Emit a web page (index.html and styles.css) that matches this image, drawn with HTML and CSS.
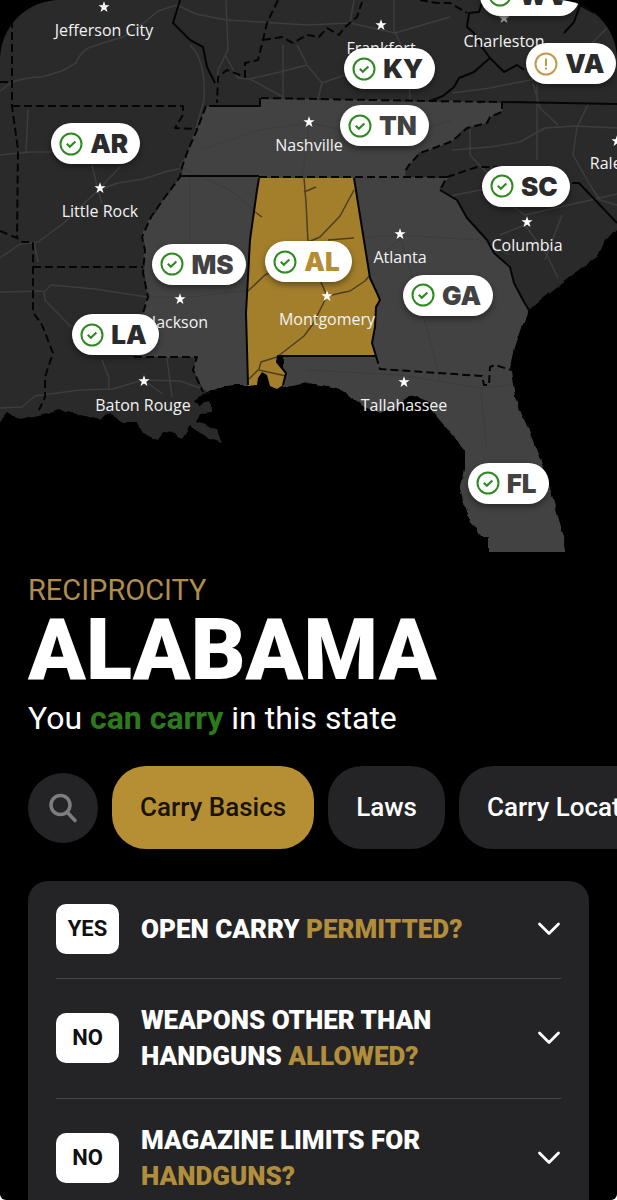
FILE: index.html
```html
<!DOCTYPE html>
<html lang="en">
<head>
<meta charset="utf-8">
<meta name="viewport" content="width=device-width, initial-scale=1">
<title>Reciprocity – Alabama</title>
<link rel="stylesheet" href="styles.css">
</head>
<body>
<main class="screen">
  <svg class="sprite" aria-hidden="true">
    <symbol id="ok" viewBox="0 0 24 24"><circle cx="12" cy="12" r="10.500" fill="none" stroke="#2f8a22" stroke-width="2"/><path d="M7.800 11.800l3 2.900 5.600-5.200" fill="none" stroke="#2f8a22" stroke-width="2.200"/></symbol>
    <symbol id="warn" viewBox="0 0 24 24"><circle cx="12" cy="12" r="10.500" fill="none" stroke="#c29a4a" stroke-width="2"/><path d="M12 6.500v7.500M12 15.500v2" fill="none" stroke="#c29a4a" stroke-width="2"/></symbol>
    <symbol id="star" viewBox="-6 -6 12 12"><path d="M0-5.800L1.400-1.800 5.600-1.800 2.200.8 3.500 4.900 0 2.400-3.500 4.900-2.200.8-5.600-1.800-1.400-1.800z" fill="#fff"/></symbol>
    <symbol id="chevron" viewBox="0 0 24 16"><path d="M2.500 3L12 12.500l9.500-9.500" fill="none" stroke="#fff" stroke-width="2.800" stroke-linecap="round" stroke-linejoin="round"/></symbol>
  </svg>

  <section class="map" aria-label="Reciprocity map">
    <svg class="terrain" viewBox="0 0 617 552" aria-hidden="true">
      <defs>
        <filter id="rough" x="-5%" y="-5%" width="110%" height="110%">
          <feTurbulence type="fractalNoise" baseFrequency="0.12" numOctaves="1" seed="4"/>
          <feDisplacementMap in="SourceGraphic" scale="6" xChannelSelector="R" yChannelSelector="G"/>
        </filter>
      </defs>
      <g filter="url(#rough)">
        <path class="land" d="M-9-9H626V222L617 229 604 243 597 258 584 267 574 274 557 287 540 300 529 310 500 360 420 390 300 380 300 350 248 350 248 385 233 385 217 387 207 392 195 400 200 407 205 402 212 403 212 412 200 413 197 422 217 430 222 442 210 438 200 433 190 425 182 438 175 433 163 432 158 440 143 433 137 423 123 423 107 413 100 420 73 413 57 410 43 415 20 420 7 413-9 432z"/>
        <path class="land land-near" d="M206 106H261V98L307 99 430 101 502 102 502 112 490 117 487 123 467 128 457 137 450 142 434 148 420 153 409 165 404 177H447L440 190 457 200 467 218 487 240 494 253 510 267 514 283 524 302 529 310 522 327 515 347 511 370 515 397 524 420 537 450 547 477 557 513 564 537 565 562H489V537H480L467 513 465 503 460 490 465 470 465 450 454 437 437 417 430 403 417 396 404 398 397 408 380 413 364 407 347 393 334 387 307 383 287 387 283 387 283 350 248 350 248 385 233 385 217 387 207 392 203 390 193 370 197 357H137L143 313 148 297 143 273 145 250 142 237 151 217 165 197 180 177 182 167 188 150 197 130z"/>
      </g>
      <path class="road" d="M0 91L12 82Q28 77 42 77L62 71 76 63Q80 53 88 48L103 43 123 37 145 22 158 11 177 5 196 14 226 20 260 22 307 25M226 0L228 50 218 70 217 84M225 55L238 78 250 79 283 97V45M250 79L280 72 307 65M297 45L307 64M190 45Q206 60 204 100L190 150 180 167M0 155L30 152 51 152M28 110L26 152M0 258L20 244 38 242 65 222 98 190 118 183 143 179 165 172 182 168M98 190L92 165M98 190L120 167M98 190L102 204M34 242L38 262M0 292L45 291 51 285 95 289 147 297M44 291L45 300 71 327M102 360L109 378V389M0 408L22 407 35 396 80 390 113 389 143 380 180 381 200 388M167 358L172 397M143 380L163 394M307 25L350 23 395 33 450 17M394 0V30L408 60 410 100M350 23L354 0M307 65L322 83 345 75 370 62M322 83L318 99M452 150L490 147 520 142 545 128 575 126 617 128M537 84V160M533 83L540 108 558 125M589 103L577 127 573 155 590 185 600 200 617 205M470 128V155L487 173 512 206 525 215 560 207 617 194M450 196L480 190 520 187M525 225L500 235M525 225L547 255 558 278M562 215L545 260M452 93L490 88 540 78 590 45 607 28"/>
      <path class="road road-faint" d="M182 168L230 190 258 213M190 175V280M200 150L260 130 309 123 390 140 452 120M309 125L302 180M355 238L400 235 480 240 510 255M400 235L430 340 440 380M400 240L355 275M250 290L190 297 147 297M307 370L400 375 480 388 511 385M480 388L487 450"/>
      <path class="alabama" d="M259 178H354L361 222 370 278 377 293 380 300 376 307 375 327 372 343 376 356H278L277 362 286 373 283 385 277 389 270 386 267 375 262 372 258 378 257 385 248 386 246 313 250 240z"/>
      <path class="highway" d="M304 178L306 202 308 242M354 190L340 216 320 237 308 242 282 251M354 238L328 240M304 192L316 187M255 212L262 217M320 280L327 296 313 324 304 336 277 357 261 362 259 369 249 379M327 296L350 291 365 281 370 275M248 291L265 275 290 262M259 370L286 376"/>
      <path class="border" d="M259 178L257 190 250 240 246 313 248 385M354 178L361 222 370 278 377 293 380 300 376 307 375 327 372 343 376 356H278L277 362 286 373 283 385M180 176H259M209 106H260V98M180 0L173 23 190 40 203 47 207 67 215 83M430 101L443 96 454 87 459 78 474 72 490 58 479 43 474 33 467 27 469 13 479 12 482 3M490 58L504 72 517 65 524 70M564 33L574 22 580 5 594 13M502 102L617 104M572 183H579L617 223M440 190L457 200 467 218 487 240 494 253 510 267 514 283 524 302 529 310"/>
      <path class="border dashed" d="M12 20V106L18 150 17 237M0 82H12M12 106H183V115L175 128 197 129M206 106L197 130 188 150 182 167 180 177 165 197 151 217 142 237 145 250 143 273 148 297 143 313M0 231L17 238 22 242 33 242V312L42 325 53 353 45 377 45 397 39 410M33 267H143M134 357H197L193 370 203 392M278 0L267 23 263 40 258 60 245 63 245 77 227 70 218 77 217 103M263 40L282 37 293 43 307 35 319 37 327 28 339 35 344 28 357 17 362 2M420 0L437 3 450 3 467 13M261 98L430 101 502 102V112L490 117 487 123 467 128 457 137 450 142 434 148 420 153 409 165 404 173M259 177H447L440 190M447 177L477 167H504M376 356L380 369 482 376 484 385H489L490 367 495 365 511 370"/>
      <g>
        <use href="#star" x="98" y="1" width="12" height="12"/>
        <use href="#star" x="375" y="19" width="12" height="12"/>
        <use href="#star" x="498" y="12" width="12" height="12" opacity=".6"/>
        <use href="#star" x="303" y="116" width="12" height="12"/>
        <use href="#star" x="94" y="182" width="12" height="12"/>
        <use href="#star" x="611" y="135" width="12" height="12"/>
        <use href="#star" x="394" y="228" width="12" height="12"/>
        <use href="#star" x="521" y="216" width="12" height="12"/>
        <use href="#star" x="174" y="293" width="12" height="12"/>
        <use href="#star" x="321" y="290" width="12" height="12"/>
        <use href="#star" x="138" y="375" width="12" height="12"/>
        <use href="#star" x="398" y="376" width="12" height="12"/>
      </g>
      <g class="city">
        <text x="104" y="36">Jefferson City</text>
        <text x="381" y="54">Frankfort</text>
        <text x="504" y="47">Charleston</text>
        <text x="309" y="151">Nashville</text>
        <text x="100" y="217">Little Rock</text>
        <text x="617" y="169">Raleigh</text>
        <text x="400" y="263">Atlanta</text>
        <text x="527" y="251">Columbia</text>
        <text x="180" y="328">Jackson</text>
        <text x="327" y="325">Montgomery</text>
        <text x="143" y="411">Baton Rouge</text>
        <text x="404" y="411">Tallahassee</text>
      </g>
    </svg>
    <button class="pin pin-wv"><svg><use href="#ok"/></svg>WV</button>
    <button class="pin pin-va"><svg><use href="#warn"/></svg>VA</button>
    <button class="pin pin-ky"><svg><use href="#ok"/></svg>KY</button>
    <button class="pin pin-tn near"><svg><use href="#ok"/></svg>TN</button>
    <button class="pin pin-ar"><svg><use href="#ok"/></svg>AR</button>
    <button class="pin pin-sc"><svg><use href="#ok"/></svg>SC</button>
    <button class="pin pin-ms near"><svg><use href="#ok"/></svg>MS</button>
    <button class="pin pin-al current"><svg><use href="#ok"/></svg>AL</button>
    <button class="pin pin-ga near"><svg><use href="#ok"/></svg>GA</button>
    <button class="pin pin-la"><svg><use href="#ok"/></svg>LA</button>
    <button class="pin pin-fl near"><svg><use href="#ok"/></svg>FL</button>
  </section>

  <header class="intro">
    <p class="eyebrow">RECIPROCITY</p>
    <h1 class="state">ALABAMA</h1>
    <p class="status">You <strong>can carry</strong> in this state</p>
  </header>

  <nav class="tabs" aria-label="Sections">
    <button class="search" aria-label="Search"><svg viewBox="0 0 30 30"><circle cx="12.500" cy="12" r="9.500"/><path d="M19.500 19.500L27 27.500"/></svg></button>
    <button class="tab active">Carry Basics</button>
    <button class="tab">Laws</button>
    <button class="tab">Carry Locations</button>
  </nav>

  <section class="card">
    <button class="item"><span class="answer">YES</span><span class="question">OPEN CARRY <em>PERMITTED?</em></span><svg class="chevron"><use href="#chevron"/></svg></button>
    <button class="item"><span class="answer">NO</span><span class="question">WEAPONS OTHER THAN<br>HANDGUNS <em>ALLOWED?</em></span><svg class="chevron"><use href="#chevron"/></svg></button>
    <button class="item"><span class="answer">NO</span><span class="question">MAGAZINE LIMITS FOR<br><em>HANDGUNS?</em></span><svg class="chevron"><use href="#chevron"/></svg></button>
  </section>
</main>
</body>
</html>
```
FILE: styles.css
```css
* { box-sizing: border-box; }
body { margin: 0; background: #fff; font-family: Roboto, sans-serif; }
button { border: 0; margin: 0; font: inherit; cursor: pointer; }
p, h1 { margin: 0; }

.screen {
  height: 100vh;
  overflow: hidden;
  background: #000;
  color: #fff;
  border-radius: 0 0 6px 6px;
}
.sprite { position: absolute; width: 0; height: 0; }

.map {
  position: relative;
  aspect-ratio: 617 / 552;
  overflow: hidden;
  border-radius: 60px 60px 0 0;
}
.terrain { display: block; width: 100%; height: 100%; }
.land { fill: #2b2b2b; }
.land-near { fill: #424242; }
.alabama { fill: #a37f2b; }
.road { fill: none; stroke: #3d3d3d; stroke-width: 1.5; stroke-linejoin: round; }
.road-faint { stroke: #3c3c3c; stroke-width: 1; }
.highway { fill: none; stroke: #4c3f22; stroke-width: 1.5; stroke-linejoin: round; }
.border { fill: none; stroke: #050505; stroke-width: 2; stroke-linejoin: round; }
.dashed { stroke-dasharray: 8 4; }
.city text {
  fill: #f2f2f2;
  font-family: "Open Sans", sans-serif;
  font-size: 16px;
  text-anchor: middle;
}

.pin {
  position: absolute;
  display: flex;
  align-items: center;
  gap: 7px;
  height: 41px;
  padding: 0 12px 0 8px;
  border-radius: 21px;
  background: #fff;
  color: #2b2b2b;
  font: 900 26px/41px Inter, sans-serif;
  box-shadow: 0 3px 6px rgba(0, 0, 0, .4);
}
.pin svg { width: 24px; height: 24px; flex: none; }
.pin.near { color: #424242; }
.pin.current { color: #b58e34; }
.pin-wv { left: 77.8%; top: -4.6%; }
.pin-va { left: 85.3%; top: 7.8%; }
.pin-ky { left: 55.8%; top: 8.7%; }
.pin-tn { left: 55.1%; top: 19.1%; }
.pin-ar { left: 8.3%; top: 22.3%; }
.pin-sc { left: 78.1%; top: 30%; }
.pin-ms { left: 24.7%; top: 44.2%; }
.pin-al { left: 43%; top: 43.7%; }
.pin-ga { left: 65.3%; top: 49.8%; }
.pin-la { left: 11.7%; top: 56.9%; }
.pin-fl { left: 75.8%; top: 83.8%; }

.intro { padding: 20px 28px 0; }
.eyebrow { color: #b08d4b; font-size: 29px; line-height: 36px; }
.state { font-size: 85px; line-height: 84px; font-weight: 900; }
.status { font-size: 32px; line-height: 52px; white-space: nowrap; }
.status strong { color: #2d7a1c; }

.tabs {
  display: flex;
  align-items: center;
  gap: 14px;
  padding: 22px 0 32px 28px;
  overflow: hidden;
}
.search {
  display: grid;
  place-items: center;
  flex: none;
  width: 70px;
  height: 70px;
  padding: 0;
  border-radius: 50%;
  background: #242426;
}
.search svg { width: 30px; height: 30px; fill: none; stroke: #7d7d80; stroke-width: 3.5; stroke-linecap: round; }
.tab {
  flex: none;
  padding: 0 28px;
  border-radius: 34px;
  background: #242426;
  color: #fff;
  font-size: 26px;
  font-weight: 500;
  line-height: 83px;
  white-space: nowrap;
}
.tab.active { background: #b68f34; color: #191307; }

.card {
  margin: 0 28px;
  padding: 0 28px;
  border-radius: 20px;
  background: #242426;
}
.item {
  display: flex;
  align-items: center;
  gap: 22px;
  width: 100%;
  padding: 23px 0 24px;
  background: none;
  color: #fff;
  text-align: left;
}
.item + .item { border-top: 1px solid #48484a; }
.answer {
  flex: none;
  width: 63px;
  border-radius: 10px;
  background: #fff;
  color: #111;
  font-size: 22px;
  font-weight: 700;
  line-height: 50px;
  text-align: center;
}
.question { flex: 1; font-size: 26px; font-weight: 900; line-height: 36px; }
.question em { font-style: normal; color: #b28e3c; }
.chevron { flex: none; width: 24px; height: 16px; }
```
